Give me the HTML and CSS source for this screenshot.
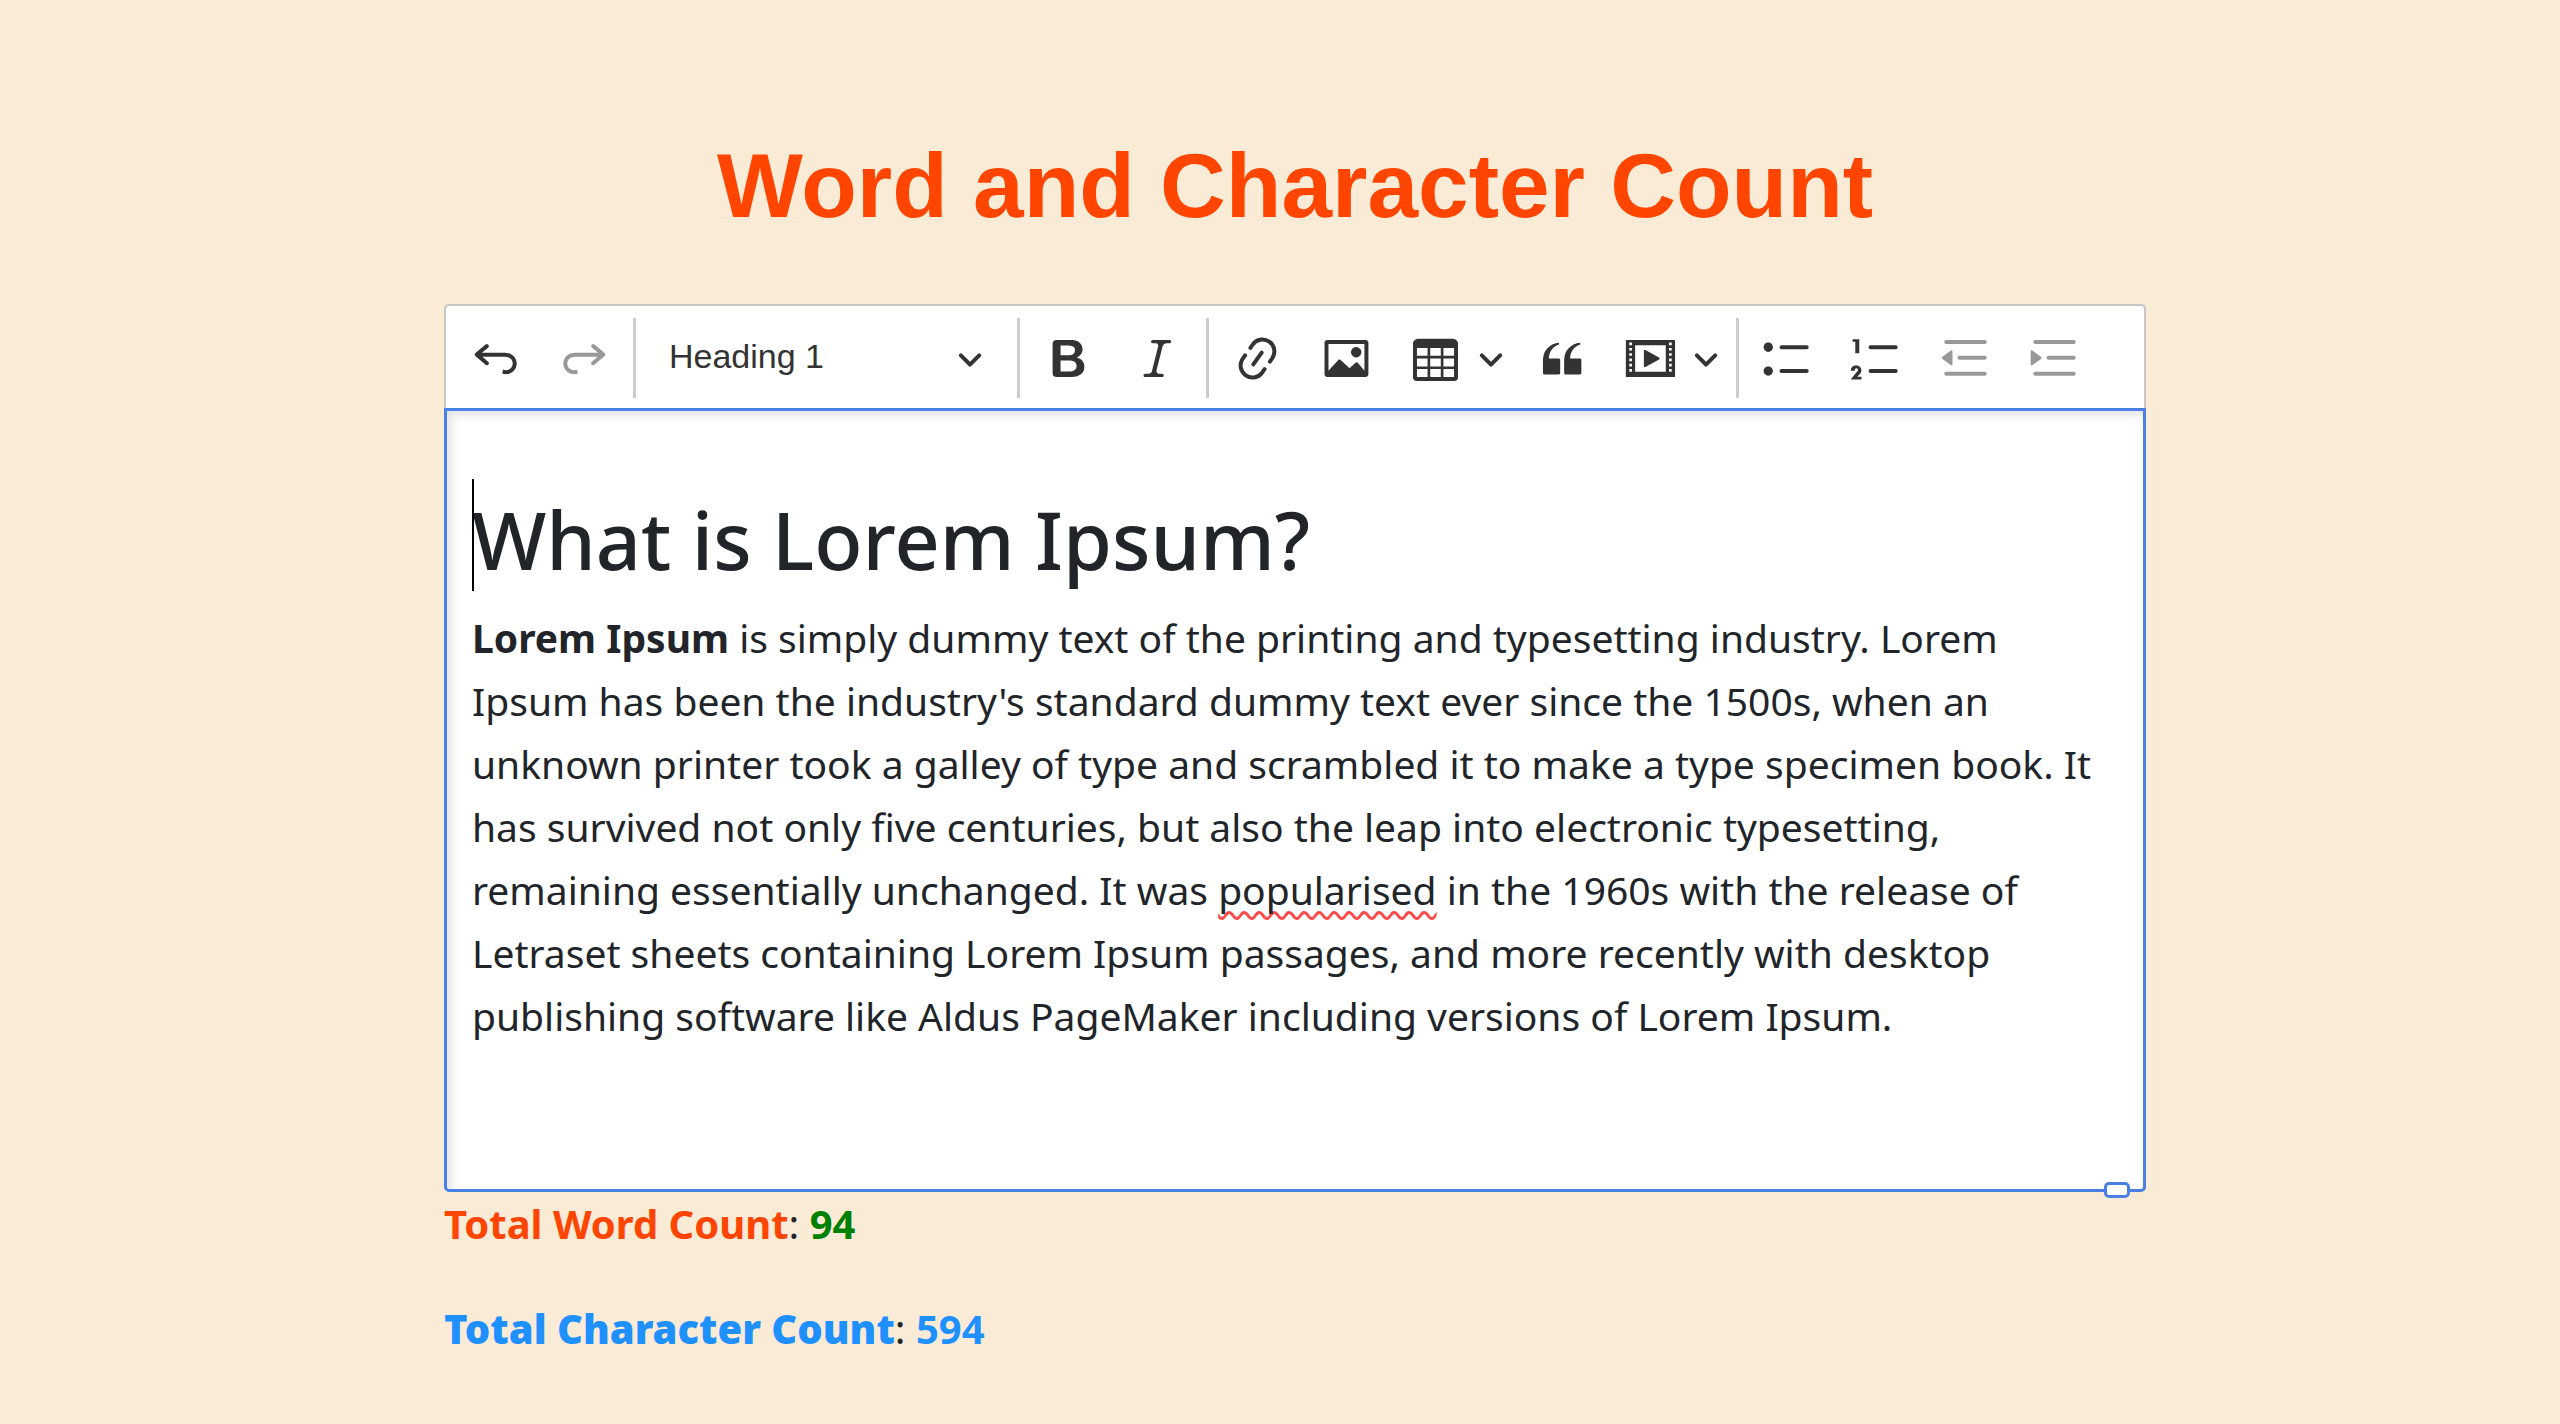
FILE: index.html
```html
<!DOCTYPE html>
<html lang="en">
<head>
  <meta charset="UTF-8" />
  <meta name="viewport" content="width=device-width, initial-scale=1.0"/>
  <title>Word and Character Count</title>
  <link rel="stylesheet" href="styles.css">
</head>
<body>
  <div class="container">
    <h1 class="title">Word and Character Count</h1>

    <div class="editor">
      <div class="toolbar" role="toolbar" aria-label="Editor toolbar">
        <button class="btn" type="button" aria-label="Undo">
          <svg class="icon" viewBox="0 0 20 20"><path d="m5.042 9.367 2.189 1.837a.75.75 0 0 1-.965 1.149l-3.788-3.18a.747.747 0 0 1-.21-.284.75.75 0 0 1 .17-.945L6.23 4.762a.75.75 0 1 1 .964 1.15L4.863 7.866h8.917A.75.75 0 0 1 14 7.9a4 4 0 1 1-1.477 7.718l.344-1.489a2.5 2.5 0 1 0 1.094-4.73l.008-.032H5.042z"/></svg>
        </button>
        <button class="btn" type="button" aria-label="Redo" disabled>
          <svg class="icon" viewBox="0 0 20 20"><path d="m14.958 9.367-2.189 1.837a.75.75 0 0 0 .965 1.149l3.788-3.18a.747.747 0 0 0 .21-.284.75.75 0 0 0-.17-.945L13.77 4.762a.75.75 0 1 0-.964 1.15l2.331 1.955H6.22A.75.75 0 0 0 6 7.9a4 4 0 1 0 1.477 7.718l-.344-1.489A2.5 2.5 0 1 1 6.039 9.4l-.008-.032h8.927z"/></svg>
        </button>
        <span class="separator"></span>

        <div class="heading-dropdown">
          <select class="heading-select" aria-label="Heading">
            <option>Paragraph</option>
            <option selected>Heading 1</option>
            <option>Heading 2</option>
            <option>Heading 3</option>
          </select>
          <svg class="arrow" viewBox="0 0 10 10"><path d="M.941 4.523a.75.75 0 1 1 1.06-1.06l3.006 3.005 3.005-3.005a.75.75 0 1 1 1.06 1.06l-3.549 3.55a.75.75 0 0 1-1.168-.136L.941 4.523z"/></svg>
        </div>
        <span class="separator"></span>

        <button class="btn" type="button" aria-label="Bold">
          <svg class="icon" viewBox="0 0 20 20"><path d="M10.187 17H5.773c-.637 0-1.092-.138-1.364-.415-.273-.277-.409-.718-.409-1.323V4.738c0-.617.14-1.062.419-1.332.279-.27.73-.406 1.354-.406h4.68c.69 0 1.288.041 1.793.124.506.083.96.242 1.36.478.341.197.644.447.906.75a3.262 3.262 0 0 1 .808 2.162c0 1.401-.722 2.426-2.167 3.075C15.05 10.175 16 11.315 16 13.01a3.756 3.756 0 0 1-2.296 3.504 6.1 6.1 0 0 1-1.517.377c-.571.073-1.238.11-2 .11zm-.217-6.217H7v4.087h3.069c1.977 0 2.965-.69 2.965-2.072 0-.707-.256-1.22-.768-1.537-.512-.319-1.277-.478-2.296-.478zM7 5.13v3.619h2.606c.729 0 1.292-.067 1.69-.2a1.6 1.6 0 0 0 .91-.765c.165-.267.247-.566.247-.897 0-.707-.26-1.176-.778-1.409-.519-.232-1.31-.348-2.375-.348H7z"/></svg>
        </button>
        <button class="btn" type="button" aria-label="Italic">
          <svg class="icon" viewBox="0 0 20 20"><path d="m9.586 14.633.021.004c-.036.335.095.655.393.962.082.083.173.15.274.201h1.474a.6.6 0 1 1 0 1.2H5.304a.6.6 0 0 1 0-1.2h1.15c.474-.07.809-.182 1.005-.334.157-.122.291-.32.404-.597l2.416-9.55a1.053 1.053 0 0 0-.281-.823 1.12 1.12 0 0 0-.442-.296H8.15a.6.6 0 0 1 0-1.2h6.443a.6.6 0 1 1 0 1.2h-1.195c-.376.056-.65.155-.823.296-.215.175-.423.439-.623.79l-2.366 9.347z"/></svg>
        </button>
        <span class="separator"></span>

        <button class="btn" type="button" aria-label="Link">
          <svg class="icon" viewBox="0 0 20 20"><path d="m11.077 15 .991-1.416a.75.75 0 1 1 1.229.86l-1.148 1.64a.748.748 0 0 1-.217.206 5.251 5.251 0 0 1-8.503-5.955.741.741 0 0 1 .12-.274l1.147-1.639a.75.75 0 1 1 1.228.86L4.933 10.7l.006.003a3.75 3.75 0 0 0 6.132 4.294l.006.004zm5.494-5.335a.748.748 0 0 1-.12.274l-1.147 1.639a.75.75 0 1 1-1.228-.86l.86-1.23a3.75 3.75 0 0 0-6.144-4.301l-.86 1.229a.75.75 0 0 1-1.229-.86l1.148-1.64a.748.748 0 0 1 .217-.206 5.251 5.251 0 0 1 8.503 5.955zm-4.563-2.532a.75.75 0 0 1 .184 1.045l-3.155 4.505a.75.75 0 1 1-1.229-.86l3.155-4.506a.75.75 0 0 1 1.045-.184z"/></svg>
        </button>
        <button class="btn" type="button" aria-label="Insert image">
          <svg class="icon" viewBox="0 0 20 20"><path d="M6.91 10.54c.26-.23.64-.21.88.03l3.36 3.14 2.23-2.06a.64.64 0 0 1 .87 0l2.52 2.97V4.5H3.2v10.12l3.71-4.08zm10.27-7.51c.6 0 1.09.47 1.09 1.05v11.84c0 .59-.49 1.06-1.09 1.06H2.79c-.6 0-1.09-.47-1.09-1.06V4.08c0-.58.49-1.05 1.1-1.05h14.38zm-5.22 5.56a1.96 1.96 0 1 1 3.4-1.96 1.96 1.96 0 0 1-3.4 1.96z"/></svg>
        </button>
        <button class="btn btn-menu" type="button" aria-label="Insert table">
          <svg class="icon" viewBox="0 0 20 20"><path d="M3 6v3h4V6H3zm0 4v3h4v-3H3zm0 4v3h4v-3H3zm5 3h4v-3H8v3zm5 0h4v-3h-4v3zm4-4v-3h-4v3h4zm0-4V6h-4v3h4zm1.5 8a1.5 1.5 0 0 1-1.5 1.5H3A1.5 1.5 0 0 1 1.5 17V4c.222-.863 1.068-1.5 2-1.5h13c.932 0 1.778.637 2 1.5v13zM12 13v-3H8v3h4zm0-4V6H8v3h4z"/></svg>
          <svg class="arrow" viewBox="0 0 10 10"><path d="M.941 4.523a.75.75 0 1 1 1.06-1.06l3.006 3.005 3.005-3.005a.75.75 0 1 1 1.06 1.06l-3.549 3.55a.75.75 0 0 1-1.168-.136L.941 4.523z"/></svg>
        </button>
        <button class="btn" type="button" aria-label="Block quote">
          <svg class="icon" viewBox="0 0 20 20"><path d="M3 10.423a6.5 6.5 0 0 1 6.056-6.408l.038.67C6.448 5.423 5.354 7.663 5.22 10H9c.552 0 .5.432.5.986v4.511c0 .554-.448.503-1 .503h-5c-.552 0-.5-.449-.5-1.003v-4.574zm8 0a6.5 6.5 0 0 1 6.056-6.408l.038.67c-2.646.739-3.74 2.979-3.873 5.315H17c.552 0 .5.432.5.986v4.511c0 .554-.448.503-1 .503h-5c-.552 0-.5-.449-.5-1.003v-4.574z"/></svg>
        </button>
        <button class="btn btn-menu" type="button" aria-label="Insert media">
          <svg class="icon" viewBox="0 0 20 20"><path d="M18.68 3.03c.6 0 .59-.03.59.55v12.84c0 .59.01.56-.59.56H1.29c-.6 0-.59.03-.59-.56V3.58c0-.58-.01-.55.6-.55h17.38zM15.77 15V5H4.2v10h11.57zM2 4v1h1V4H2zm0 2v1h1V6H2zm0 2v1h1V8H2zm0 2v1h1v-1H2zm0 2v1h1v-1H2zm0 2v1h1v-1H2zM17 4v1h1V4h-1zm0 2v1h1V6h-1zm0 2v1h1V8h-1zm0 2v1h1v-1h-1zm0 2v1h1v-1h-1zm0 2v1h1v-1h-1zM7.5 7.177a.4.4 0 0 1 .593-.351l5.133 2.824a.4.4 0 0 1 0 .7l-5.133 2.824a.4.4 0 0 1-.593-.35V7.177z"/></svg>
          <svg class="arrow" viewBox="0 0 10 10"><path d="M.941 4.523a.75.75 0 1 1 1.06-1.06l3.006 3.005 3.005-3.005a.75.75 0 1 1 1.06 1.06l-3.549 3.55a.75.75 0 0 1-1.168-.136L.941 4.523z"/></svg>
        </button>
        <span class="separator"></span>

        <button class="btn" type="button" aria-label="Bulleted list">
          <svg class="icon" viewBox="0 0 20 20"><path d="M7 5.75c0 .414.336.75.75.75h9.5a.75.75 0 1 0 0-1.5h-9.5a.75.75 0 0 0-.75.75zm-6 0C1 4.784 1.777 4 2.75 4c.966 0 1.75.777 1.75 1.75 0 .966-.777 1.75-1.75 1.75C1.784 7.5 1 6.723 1 5.75zm6 9c0 .414.336.75.75.75h9.5a.75.75 0 1 0 0-1.5h-9.5a.75.75 0 0 0-.75.75zm-6 0c0-.966.777-1.75 1.75-1.75.966 0 1.75.777 1.75 1.75 0 .966-.777 1.75-1.75 1.75-.966 0-1.75-.777-1.75-1.75z"/></svg>
        </button>
        <button class="btn" type="button" aria-label="Numbered list">
          <svg class="icon" viewBox="0 0 20 20"><path d="M7 5.75c0 .414.336.75.75.75h9.5a.75.75 0 1 0 0-1.5h-9.5a.75.75 0 0 0-.75.75zM3.5 3v5H2V3.7H1v-1h2.5V3zM.343 17.857l2.59-3.257H2.92a.6.6 0 1 0-1.04 0H.302a2 2 0 1 1 3.995 0h-.001c-.048.405-.16.734-.333.988-.175.254-.59.692-1.244 1.312H4.3v1h-4l.043-.043zM7 14.75a.75.75 0 0 1 .75-.75h9.5a.75.75 0 1 1 0 1.5h-9.5a.75.75 0 0 1-.75-.75z"/></svg>
        </button>
        <button class="btn" type="button" aria-label="Decrease indent" disabled>
          <svg class="icon" viewBox="0 0 20 20"><path d="M2 3.75c0 .414.336.75.75.75h14.5a.75.75 0 1 0 0-1.5H2.75a.75.75 0 0 0-.75.75zm5 6c0 .414.336.75.75.75h9.5a.75.75 0 1 0 0-1.5h-9.5a.75.75 0 0 0-.75.75zM2.75 16.5h14.5a.75.75 0 1 0 0-1.5H2.75a.75.75 0 1 0 0 1.5zM1.2 9.4 4.5 7c.3-.2.6 0 .6.3v4.9c0 .3-.3.5-.6.3L1.2 10.1a.4.4 0 0 1 0-.7z"/></svg>
        </button>
        <button class="btn" type="button" aria-label="Increase indent" disabled>
          <svg class="icon" viewBox="0 0 20 20"><path d="M2 3.75c0 .414.336.75.75.75h14.5a.75.75 0 1 0 0-1.5H2.75a.75.75 0 0 0-.75.75zm5 6c0 .414.336.75.75.75h9.5a.75.75 0 1 0 0-1.5h-9.5a.75.75 0 0 0-.75.75zM2.75 16.5h14.5a.75.75 0 1 0 0-1.5H2.75a.75.75 0 1 0 0 1.5zM5 9.4 1.6 7C1.3 6.8 1 7 1 7.3v4.9c0 .3.3.5.6.3L5 10.1a.4.4 0 0 0 0-.7z"/></svg>
        </button>
      </div>

      <div class="editable" contenteditable="true" spellcheck="false" role="textbox" aria-label="Rich text editor">
        <h2 class="heading">What is Lorem Ipsum?</h2>
        <p class="text"><strong>Lorem Ipsum</strong> is simply dummy text of the printing and typesetting industry. Lorem<br>
          Ipsum has been the industry's standard dummy text ever since the 1500s, when an<br>
          unknown printer took a galley of type and scrambled it to make a type specimen book. It<br>
          has survived not only five centuries, but also the leap into electronic typesetting,<br>
          remaining essentially unchanged. It was <span class="misspelled">popularised</span> in the 1960s with the release of<br>
          Letraset sheets containing Lorem Ipsum passages, and more recently with desktop<br>
          publishing software like Aldus PageMaker including versions of Lorem Ipsum.</p>
      </div>
      <span class="handle"></span>
    </div>

    <p class="count"><span class="word-label">Total Word Count</span>: <span class="word-value">94</span></p>
    <p class="count"><span class="char-label">Total Character Count</span>: <span class="char-value">594</span></p>
  </div>
</body>
</html>
```
FILE: styles.css
```css
:root {
  --text-color: #212529;
  --icon-color: #333333;
  --border-color: #c9c6c1;
  --focus-color: #4a80e4;
}

* {
  box-sizing: border-box;
}

body {
  margin: 0;
  padding: 132px 0 0 30px;
  background: #faebd7;
  color: var(--text-color);
  font-family: 'Noto Sans', 'Open Sans', sans-serif;
  font-size: 40px;
  line-height: 63px;
}

.container {
  width: 100%;
  max-width: 1702px;
  margin: 0 auto;
}

.title {
  margin: 0 0 64px;
  font-family: 'Liberation Sans', Arial, sans-serif;
  font-size: 91px;
  line-height: 108px;
  text-align: center;
  color: orangered;
}

.editor {
  position: relative;
}

.toolbar {
  display: flex;
  align-items: center;
  gap: 4px;
  height: 104px;
  padding: 2px 7px 0;
  background: #ffffff;
  border: 2px solid var(--border-color);
  border-bottom: none;
  border-radius: 5px 5px 0 0;
}

.btn {
  display: flex;
  align-items: center;
  flex: none;
  height: 84px;
  padding: 0 16px;
  background: none;
  border: none;
  border-radius: 5px;
  cursor: pointer;
}
.btn:hover { background: #f0f0f0; }
.btn:disabled { opacity: 0.5; cursor: default; }

.btn-menu { gap: 16px; padding-right: 11px; }

.icon {
  display: block;
  width: 53px;
  height: 53px;
  fill: var(--icon-color);
}

.arrow {
  display: block;
  width: 26px;
  height: 26px;
  fill: var(--icon-color);
}

.separator {
  flex: none;
  width: 3px;
  height: 80px;
  margin: 0 2px;
  background: #cccccc;
}

.heading-dropdown {
  position: relative;
  flex: none;
  width: 369px;
}
.heading-dropdown .arrow {
  position: absolute;
  top: 29px;
  right: 28px;
  pointer-events: none;
}

.heading-select {
  appearance: none;
  display: block;
  width: 100%;
  height: 84px;
  padding: 0 64px 4px 27px;
  background: none;
  border: none;
  color: var(--icon-color);
  font-family: 'Liberation Sans', Arial, sans-serif;
  font-size: 34px;
}

.editable {
  min-height: 784px;
  padding: 68px 25px 40px;
  background: #ffffff;
  border: 3px solid var(--focus-color);
  border-radius: 0 0 5px 5px;
  box-shadow: inset 5px 5px 8px rgba(0, 0, 0, 0.1);
  outline: none;
}

.heading {
  position: relative;
  margin: 0 0 8px;
  padding-top: 2px;
  font-size: 79px;
  font-weight: 500;
  line-height: 117px;
}

/* text cursor in front of the heading */
.heading::before {
  content: "";
  position: absolute;
  top: 0;
  left: 0;
  width: 2px;
  height: 112px;
  background: #000000;
}

.text {
  margin: 0;
  font-size: 39px;
  white-space: nowrap;
}

.misspelled {
  text-decoration: underline wavy #ff4a4a 3px;
  text-decoration-skip-ink: none;
  text-underline-offset: 6px;
}

.handle {
  position: absolute;
  right: 16px;
  bottom: -6px;
  width: 26px;
  height: 16px;
  background: #ffffff;
  border: 3px solid var(--focus-color);
  border-radius: 5px;
}

.count {
  margin: 0 0 42px;
}

.word-label { color: orangered; font-weight: 700; }
.word-value { color: green; font-weight: 700; }
.char-label { color: dodgerblue; font-weight: 900; }
.char-value { color: dodgerblue; font-weight: 700; }
```
